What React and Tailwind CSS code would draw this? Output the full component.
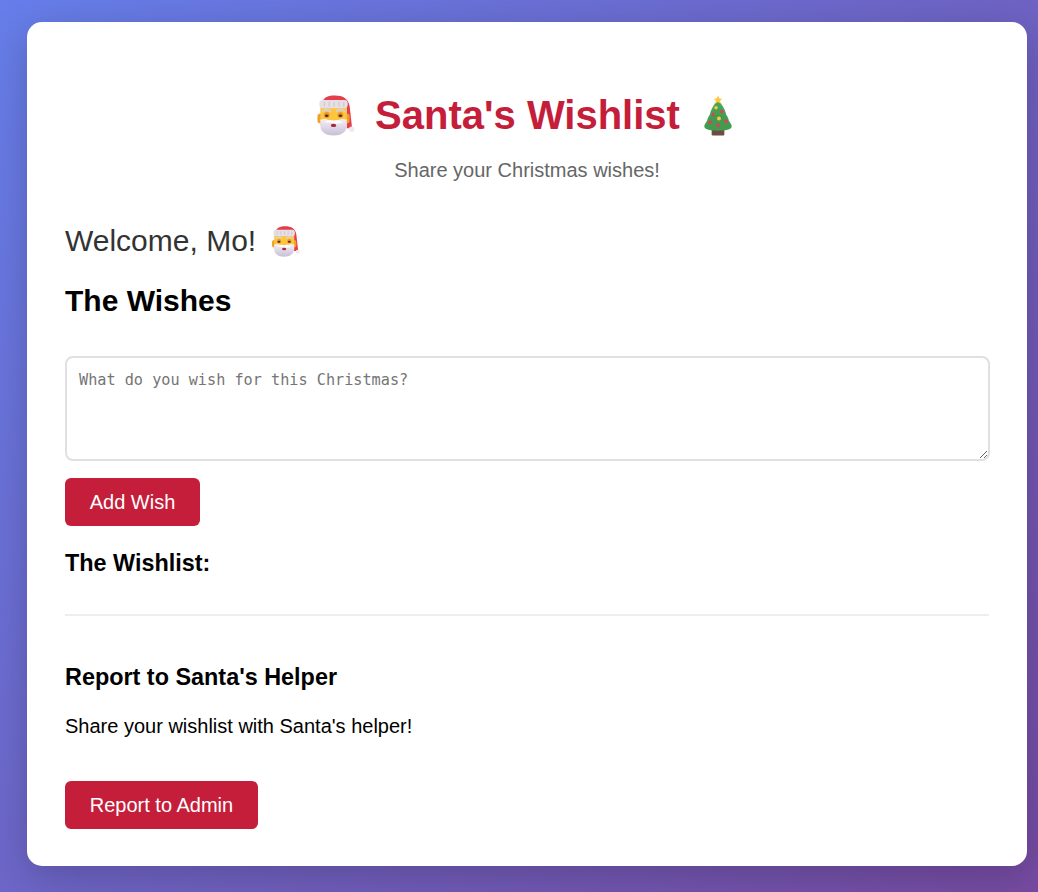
function Santa({ className }) {
  return (
    <svg viewBox="0 0 40 42" className={className}>
      <defs>
        <linearGradient id="beard" x1="0" y1="0" x2="0" y2="1">
          <stop offset="0" stopColor="#f4eff6" />
          <stop offset="1" stopColor="#c8bfd6" />
        </linearGradient>
      </defs>
      <path d="M5 12C6 3 10 .5 19 .5c8 0 13.500 3 15 11L36.500 34H31V13H5z" fill="#e53d4d" />
      <circle cx="36" cy="35" r="2.800" fill="#efe9f2" />
      <rect x="1" y="19" width="6" height="10" rx="3" fill="#f2a02c" />
      <rect x="28" y="19" width="6" height="10" rx="3" fill="#f2a02c" />
      <rect x="4" y="11" width="27" height="20" fill="#ffc53d" />
      <path d="M4 25c1.500 0 2.500-.5 4-.5 3 0 5 2 9.500 2s6.500-2 9.500-2c1.500 0 2.500.5 4 .5v7c0 6-6 9.500-13.500 9.500S4 38 4 32z" fill="url(#beard)" />
      <rect x="3" y="5" width="29" height="8.500" rx="3.500" fill="#e6e0e4" />
      <path d="M8 7v5M13 7v5M18 7v5M23 7v5M28 7v5" stroke="#cbc3cc" strokeWidth="1" />
      <path d="M6.500 16.500c2-1.800 5.500-1.800 7.500 0M21 16.500c2-1.800 5.500-1.800 7.500 0" stroke="#d8d0cc" strokeWidth="2.400" fill="none" strokeLinecap="round" />
      <circle cx="10.500" cy="20.500" r="3" fill="#eb9a2c" />
      <circle cx="24.500" cy="20.500" r="3" fill="#eb9a2c" />
      <ellipse cx="10.500" cy="21.300" rx="1.900" ry="1.300" fill="#4a3020" />
      <ellipse cx="24.500" cy="21.300" rx="1.900" ry="1.300" fill="#4a3020" />
      <path d="M8 28c4.500-3 7-3 9.500-1.500C20 25 22.500 25 27 28c-3 1.500-6.500 1.700-9.500 1s-6.500-.5-9.500-1z" fill="#fdfbfe" />
      <ellipse cx="17.500" cy="31.200" rx="2.800" ry="1.700" fill="#a8263e" />
    </svg>
  );
}

function Tree({ className }) {
  return (
    <svg viewBox="0 0 32 42" className={className}>
      <rect x="9.500" y="34" width="13" height="7.500" rx="1.200" fill="#6d4c41" />
      <path d="M16 7c-3.500 0-8 10-8 12 0 2 16 2 16 0 0-2-4.500-12-8-12z" fill="#4aa557" />
      <path d="M16 13C11 13 5 23 5 26c0 2.500 22 2.500 22 0 0-3-6-13-11-13z" fill="#46a053" />
      <path d="M16 20C9 20 2 29 2 32c0 3.500 7 4.500 14 4.500S30 35.500 30 32c0-3-7-12-14-12z" fill="#429b4f" />
      <path d="M16 .5l1.400 3 3.100.3-2.400 2 .8 3.100-2.900-1.700-2.900 1.700.8-3.100-2.400-2 3.100-.3z" fill="#fcc83c" />
      <circle cx="14" cy="13" r="1.800" fill="#fcc83c" />
      <circle cx="20" cy="17" r="1.900" fill="#d1475c" />
      <circle cx="11" cy="20" r="1.900" fill="#d1475c" />
      <circle cx="17" cy="24" r="2" fill="#fcc83c" />
      <circle cx="24" cy="27" r="2" fill="#d1475c" />
      <circle cx="8" cy="28" r="2" fill="#d1475c" />
      <circle cx="16" cy="31" r="2" fill="#d1475c" />
    </svg>
  );
}

export default function App() {
  return (
    <div className="h-[892px] overflow-hidden bg-[linear-gradient(135deg,#667eea_0%,#764ba2_100%)] pl-[27px] pt-[22px] font-['Liberation_Sans',Arial,sans-serif]">
      <div className="h-[844px] w-[1000px] rounded-[15px] bg-white px-[38px] pt-[70px] shadow-[0_10px_40px_rgba(0,0,0,0.2)]">
        {/* Encabezado */}
        <h1 className="flex h-[46px] items-center justify-center pr-[4px] text-[40px] font-bold leading-[46px] text-[#c41e3a]">
          <Santa className="mr-[19px] h-[41px] w-[40px]" />
          <span>Santa's Wishlist</span>
          <Tree className="ml-[22px] h-[41px] w-[32px]" />
        </h1>
        <p className="mt-[21px] text-center text-[20px] leading-[23px] text-[#666]">Share your Christmas wishes!</p>

        <h2 className="mt-[42px] flex h-[34px] items-center text-[30px] font-normal leading-[34px] text-[#333]">
          Welcome, Mo!
          <Santa className="ml-[15px] h-[31px] w-[30px]" />
        </h2>
        <h3 className="mt-[26px] text-[30px] font-bold leading-[34px] text-black">The Wishes</h3>

        <textarea
          placeholder="What do you wish for this Christmas?"
          className="mt-[38px] block h-[105px] w-[925px] rounded-lg border-2 border-[#e0e0e0] px-3 pb-3 pt-[13px] font-['DejaVu_Sans_Mono',monospace] text-[15.200px] leading-[18px] placeholder:text-[#757575]"
        />
        <button className="mt-[17px] block h-12 w-[135px] rounded-md bg-[#c41e3a] text-center text-[20px] text-white">Add Wish</button>

        <h4 className="mt-[24px] text-[23.400px] font-bold leading-[26px] text-black">The Wishlist:</h4>

        <div className="mt-[38px] border-t-2 border-[#eee]" />

        <h4 className="mt-[48px] text-[23.400px] font-bold leading-[26px] text-black">Report to Santa's Helper</h4>
        <p className="mt-[25px] text-[20px] leading-[23px] text-black">Share your wishlist with Santa's helper!</p>
        <button className="mt-[43px] block h-12 w-[193px] rounded-md bg-[#c41e3a] text-center text-[20px] text-white">Report to Admin</button>
      </div>
    </div>
  );
}
